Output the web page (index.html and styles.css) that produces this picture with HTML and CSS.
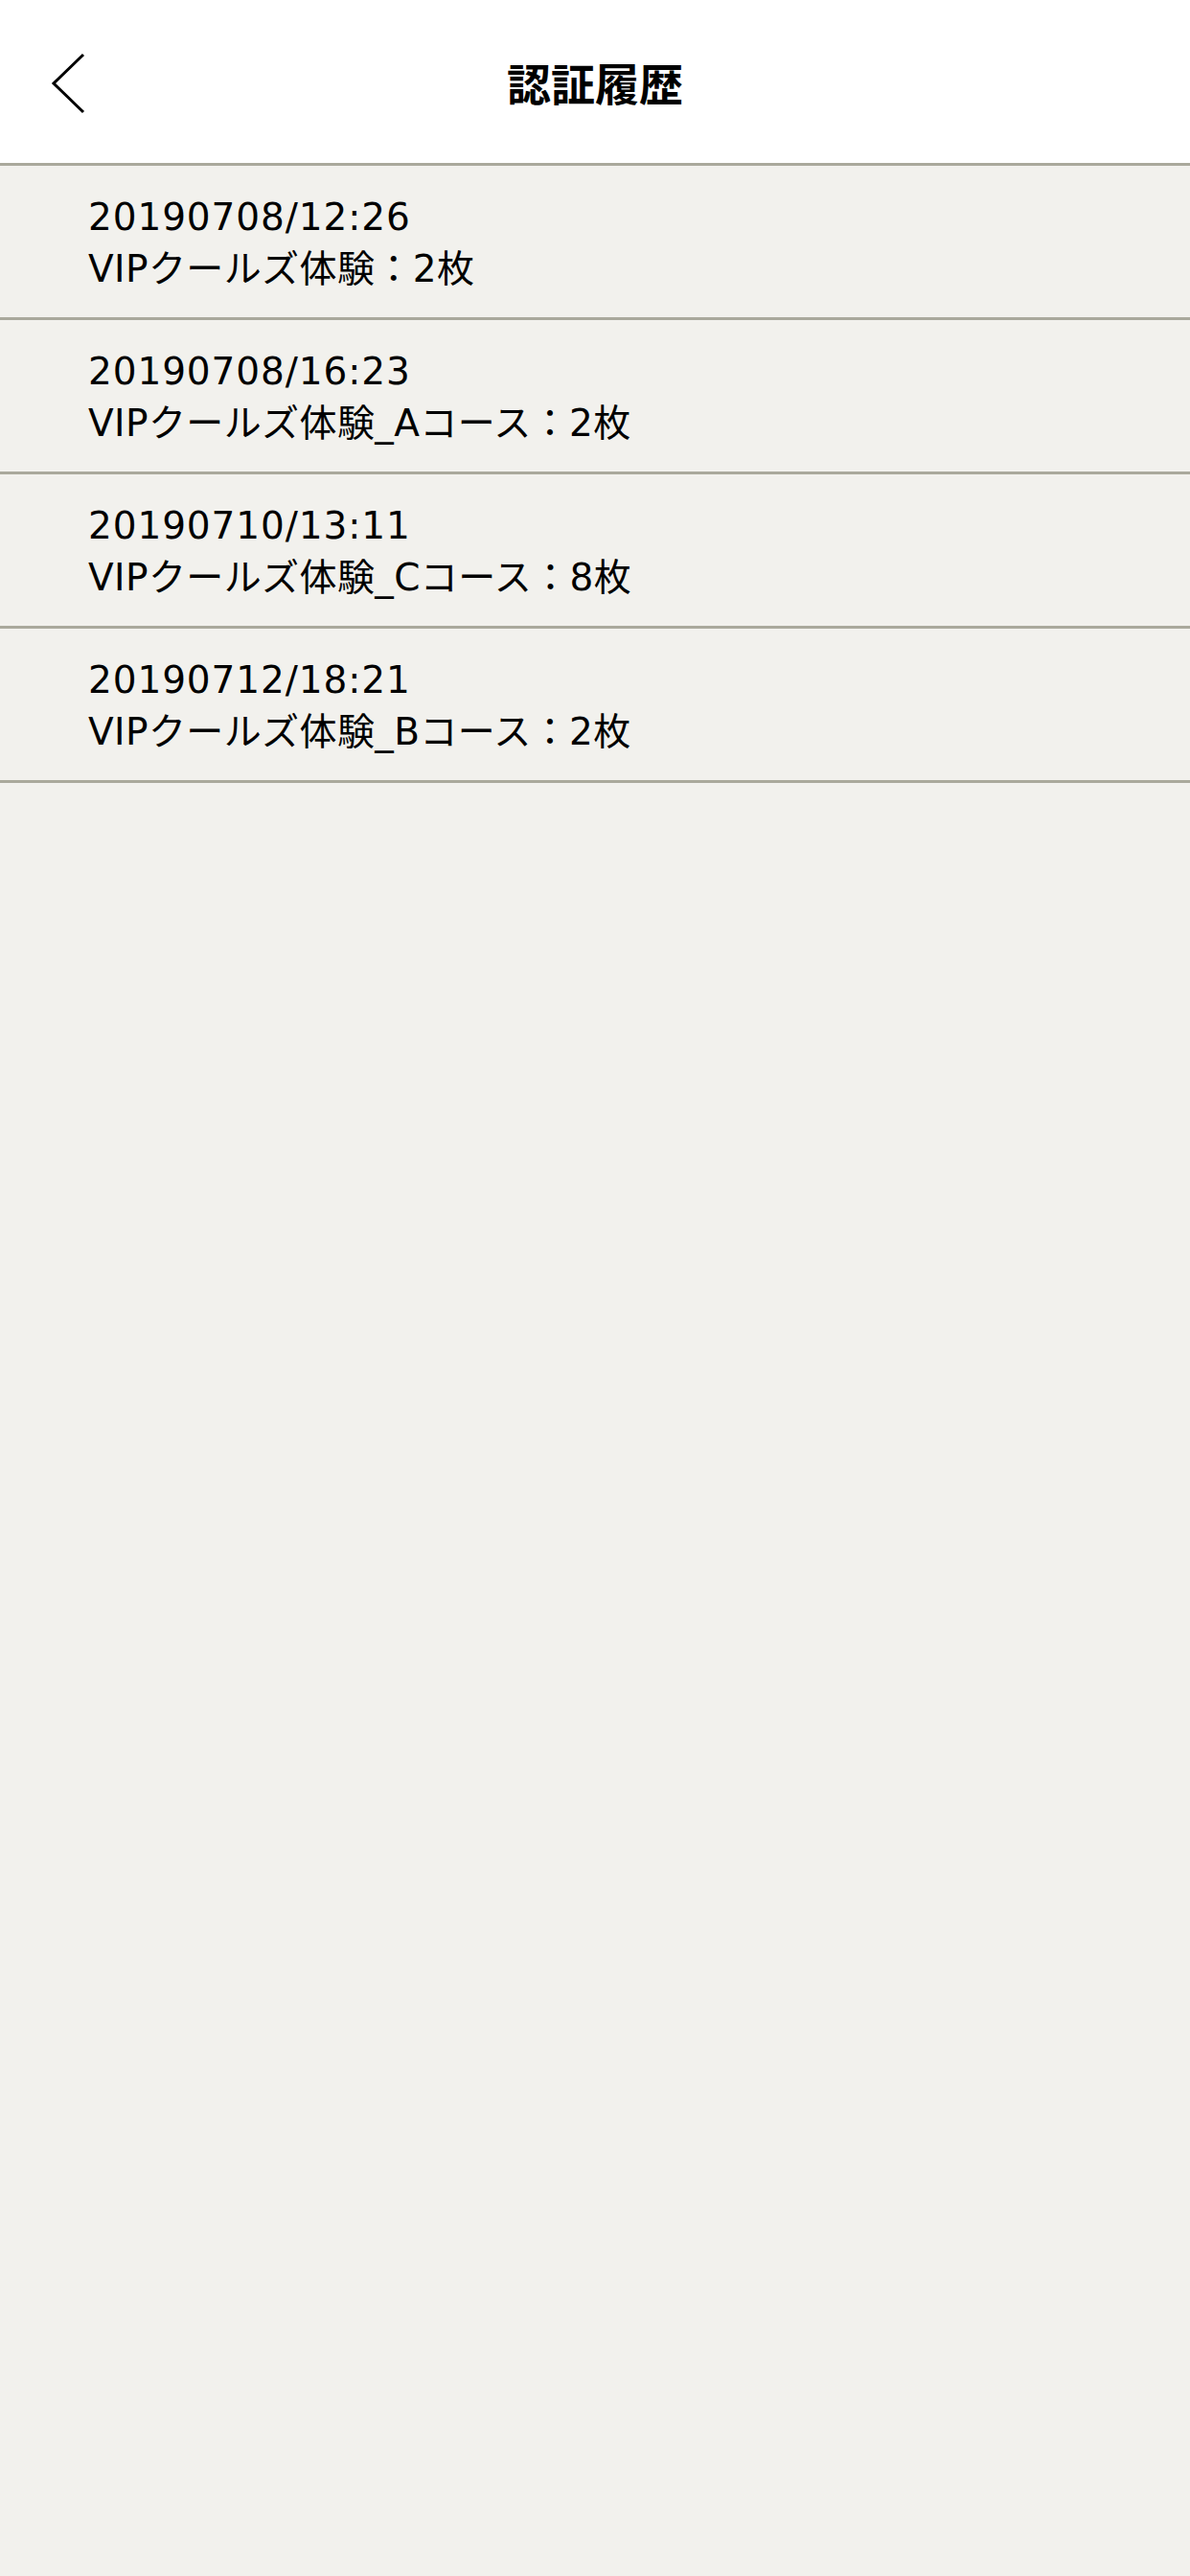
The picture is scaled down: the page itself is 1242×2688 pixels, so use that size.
FILE: index.html
```html
<!DOCTYPE html>
<html lang="ja">
<head>
  <meta charset="UTF-8">
  <meta name="viewport" content="width=device-width, initial-scale=1.0">
  <title>認証履歴</title>
  <link rel="stylesheet" href="styles.css">
</head>
<body>
  <header class="nav-bar">
    <a class="back-button" href="#">
      <svg viewBox="0 0 40 70" width="40" height="70">
        <polyline points="34,5 3,35 34,65" fill="none" stroke="#000" stroke-width="3" />
      </svg>
    </a>
    <h1 class="nav-title">認証履歴</h1>
  </header>

  <ul class="history-list">
    <li class="history-item">
      <span class="history-date">20190708/12:26</span>
      <span class="history-detail">VIPクールズ体験：2枚</span>
    </li>
    <li class="history-item">
      <span class="history-date">20190708/16:23</span>
      <span class="history-detail">VIPクールズ体験_Aコース：2枚</span>
    </li>
    <li class="history-item">
      <span class="history-date">20190710/13:11</span>
      <span class="history-detail">VIPクールズ体験_Cコース：8枚</span>
    </li>
    <li class="history-item">
      <span class="history-date">20190712/18:21</span>
      <span class="history-detail">VIPクールズ体験_Bコース：2枚</span>
    </li>
  </ul>
</body>
</html>
```

FILE: styles.css
```css
body {
  margin: 0;
  padding: 0;
  min-height: 100vh;
  font-family: "DejaVu Sans", "Noto Sans CJK JP", sans-serif;
  background-color: #f2f1ed;
  color: #000;
}

.nav-bar {
  position: relative;
  display: flex;
  justify-content: center;
  align-items: center;
  height: 170px;
  background-color: #fff;
  border-bottom: 3px solid #aaa99c;
}

.back-button {
  position: absolute;
  left: 53px;
  top: 52px;
  display: block;
  width: 40px;
  height: 70px;
}

.back-button svg {
  display: block;
}

.nav-title {
  margin: 0;
  font-family: "Noto Sans CJK JP", sans-serif;
  font-size: 46px;
  font-weight: 700;
  line-height: 1;
}

.history-list {
  list-style: none;
  margin: 0;
  padding: 0;
}

.history-item {
  display: flex;
  flex-direction: column;
  box-sizing: border-box;
  height: 161px;
  padding: 27px 0 0 92px;
  border-bottom: 3px solid #aaa99c;
  font-size: 39px;
  line-height: 54px;
}

.history-date {
  letter-spacing: 0.9px;
}

.history-detail {
  letter-spacing: 0.4px;
}
```
